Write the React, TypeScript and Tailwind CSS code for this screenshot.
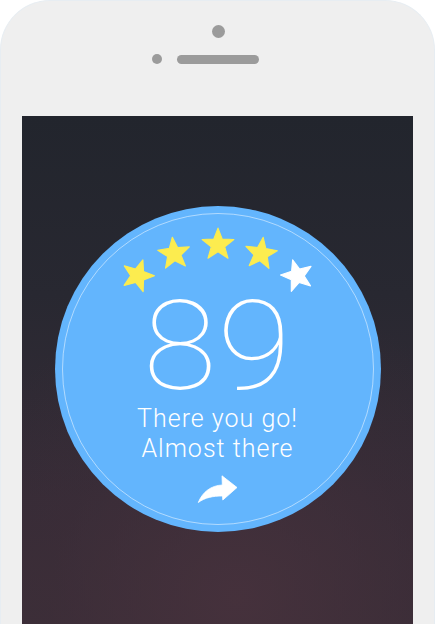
import React from "react";

const Star = ({ color, rot, mt, ml }: { color: string; rot: number; mt: number; ml: number }) => (
  <svg
    viewBox="0 0 24 24"
    width={34}
    height={34}
    style={{ transform: `rotate(${rot}deg)`, marginTop: mt, marginLeft: ml }}
    className="shrink-0"
  >
    <polygon
      points="12,0.8 14.94,8.45 23.2,8.85 16.76,14.05 19.05,22 12,17.5 4.95,22 7.24,14.05 0.8,8.85 9.06,8.45"
      fill={color}
      stroke={color}
      strokeWidth={0.8}
      strokeLinejoin="round"
    />
  </svg>
);

export default function App() {
  return (
    <div className="w-[435px] h-[624px] bg-white overflow-hidden">
      <div className="h-full rounded-t-[50px] bg-[#efefef] border border-b-0 border-[#e7edf2] flex flex-col px-[21px]">
        <div className="h-[115px] shrink-0 flex flex-col items-center pt-[24px]">
          <div className="w-[13px] h-[13px] rounded-full bg-[#9b9b9b] ml-[1px]" />
          <div className="flex items-center gap-[15px] mt-[16px] ml-[1px]">
            <div className="w-[10px] h-[10px] rounded-full bg-[#9b9b9b]" />
            <div className="w-[82px] h-[9px] rounded-full bg-[#9b9b9b]" />
            <div className="w-[10px] h-[10px]" />
          </div>
        </div>
        <div className="flex-1 flex flex-col items-center pt-[90px] bg-[radial-gradient(ellipse_80%_60%_at_55%_95%,rgba(72,50,61,0.8),rgba(62,45,56,0.4)_60%,transparent_100%),linear-gradient(to_bottom,#22252d_0%,#282831_35%,#362c37_75%,#3b2e38_100%)]">
          <div className="relative w-[326px] h-[326px] rounded-full bg-[#63b5fd] flex flex-col items-center pt-[21px]">
            <div className="absolute inset-[7px] rounded-full border border-white/50" />
            <div className="flex items-start ml-[-1px]">
              <Star color="#fcec4f" rot={18} mt={31} ml={0} />
              <Star color="#fcec4f" rot={-6} mt={9} ml={2} />
              <Star color="#fcec4f" rot={0} mt={0} ml={10} />
              <Star color="#fcec4f" rot={8} mt={9} ml={9} />
              <Star color="#ffffff" rot={-16} mt={31} ml={2} />
            </div>
            <div
              className="text-white text-[125px] leading-[96px] font-thin mt-[7px] tracking-[1px] scale-x-[1.07]"
              style={{ fontFamily: "Roboto, 'Liberation Sans', sans-serif" }}
            >
              89
            </div>
            <div
              className="text-white text-[25px] leading-[30px] font-light text-center mt-[9px] tracking-[1px]"
              style={{ fontFamily: "Roboto, 'Liberation Sans', sans-serif" }}
            >
              <div>There you go!</div>
              <div>Almost there</div>
            </div>
            <svg viewBox="0 0 42 28" width={42} height={28} className="mt-[11px] ml-[-1px]">
              <path
                d="M41 12.5 L26 0.8 L26.3 10 C15 10.5 6.5 17 2.3 27.5 C9 22.5 17 21 26.5 21 L26.8 25 Z"
                fill="#ffffff"
                stroke="#ffffff"
                strokeWidth={0.8}
                strokeLinejoin="round"
              />
            </svg>
          </div>
        </div>
      </div>
    </div>
  );
}
